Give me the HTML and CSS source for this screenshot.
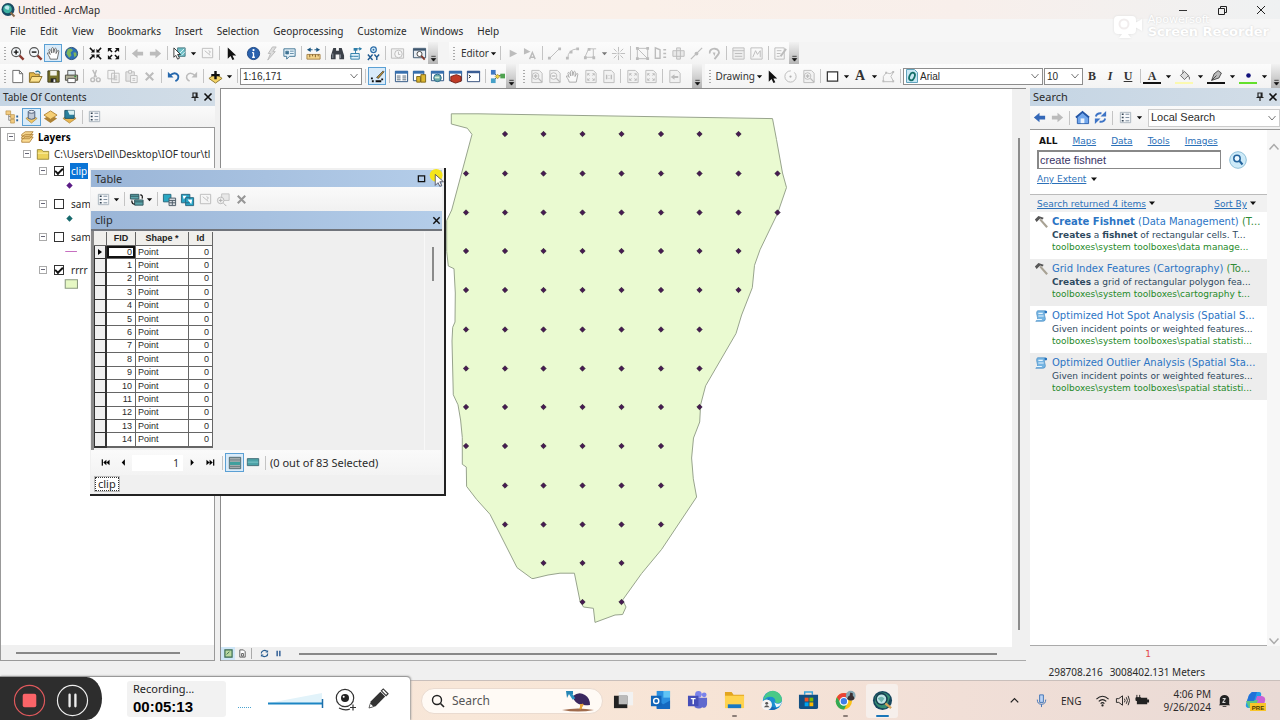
FILE: index.html
```html
<!DOCTYPE html>
<html lang="en">
<head>
<meta charset="utf-8">
<title>Untitled - ArcMap</title>
<link rel="stylesheet" href="styles.css">
</head>
<body>
<svg class="defs" aria-hidden="true">
  <symbol id="tri" viewBox="0 0 8 8"><path d="M1 2.500h6L4 6z" fill="#111"/></symbol>
  <symbol id="chev" viewBox="0 0 10 10"><path d="M1.500 3l3.500 4 3.500-4" fill="none" stroke="#777"/></symbol>
  <symbol id="over" viewBox="0 0 8 8"><path d="M1.500 1.500h5M1.500 4h5L4 7z" fill="#111" stroke="#111" stroke-width=".8"/></symbol>
  <symbol id="app" viewBox="0 0 16 16"><circle cx="8" cy="7.500" r="6.500" fill="#1b4a63"/><circle cx="7.500" cy="7" r="4.300" fill="#3fb0a0"/><path d="M4.500 5q3-3 5 0l-1 3-3-1z" fill="#bfe8ee"/><path d="M10.500 10.500l4 4" stroke="#8a6a4a" stroke-width="2"/></symbol>
  <symbol id="zin" viewBox="0 0 16 16"><path d="M10 10l4.500 4.500" stroke="#8b3a30" stroke-width="2.500"/><circle cx="6.500" cy="6.500" r="4.800" fill="#f4f8fb" stroke="#555" stroke-width="1.200"/><path d="M4 6.500h5M6.500 4v5" stroke="#111" stroke-width="1.500"/></symbol>
  <symbol id="zout" viewBox="0 0 16 16"><path d="M10 10l4.500 4.500" stroke="#8b3a30" stroke-width="2.500"/><circle cx="6.500" cy="6.500" r="4.800" fill="#f4f8fb" stroke="#555" stroke-width="1.200"/><path d="M4 6.500h5" stroke="#111" stroke-width="1.500"/></symbol>
  <symbol id="hand" viewBox="0 0 16 16"><path d="M4.500 14C4 11 1.500 9 1.500 7.500c1-.7 2 .3 3 1.500L3 4.500c.3-1.300 1.500-1 2 0l1.200 3L6 2.500c.5-1 1.700-1 2 0l.3 4.500 1-4c.6-.9 1.600-.6 1.700.3L10.700 8l1.600-3c.7-.7 1.500-.2 1.400.6L12 14z" fill="#fff" stroke="#666"/></symbol>
  <symbol id="globe" viewBox="0 0 16 16"><circle cx="8" cy="8" r="6.500" fill="#2c6fb8" stroke="#244c74"/><path d="M4 3.500q4-2 5.500 1L7 7l1 3-2.500 2.500L2.500 8zM10 7l3 0 .5 3-2.500 2z" fill="#7fb65c"/></symbol>
  <symbol id="shrink" viewBox="0 0 16 16"><path d="M2 2l3.500 3.500M14 2l-3.500 3.500M2 14l3.500-3.500M14 14l-3.500-3.500" stroke="#111" stroke-width="1.600"/><path d="M7 3v4H3zM9 3v4h4zM7 13V9H3zM9 13V9h4z" fill="#111"/></symbol>
  <symbol id="grow" viewBox="0 0 16 16"><path d="M3 3l3.500 3.500M13 3L9.500 6.500M3 13l3.500-3.500M13 13L9.500 9.500" stroke="#111" stroke-width="1.600"/><path d="M2 6.500V2h4.500zM14 6.500V2H9.500zM2 9.500V14h4.500zM14 9.500V14H9.500z" fill="#111"/></symbol>
  <symbol id="left" viewBox="0 0 16 16"><path d="M2 8l6-5v3h6v4H8v3z" fill="currentColor"/></symbol>
  <symbol id="right" viewBox="0 0 16 16"><path d="M14 8L8 3v3H2v4h6v3z" fill="currentColor"/></symbol>
  <symbol id="selfeat" viewBox="0 0 16 16"><path d="M6 2h8v9H6z" fill="#6fc0c8" stroke="#4a7880"/><path d="M8 8l5-5M10 10l4-4" stroke="#e6f8f8"/><path d="M2 2l7 7H6l2 4-2 1-2-4-2 2z" fill="#fff" stroke="#222" stroke-width=".9"/></symbol>
  <symbol id="clearsel" viewBox="0 0 16 16"><path d="M2.500 2.500h11v10h-11zM5 5l6 5M9 5l2 1-1 2" fill="none" stroke="currentColor"/></symbol>
  <symbol id="arrow" viewBox="0 0 16 16"><path d="M4 1.500v12l3-2.800L9 15l2-1-2-4h4z" fill="#111"/></symbol>
  <symbol id="info" viewBox="0 0 16 16"><circle cx="8" cy="8" r="6.500" fill="#2a62ae" stroke="#1d4580"/><path d="M8 7v5M6.500 7H8M6.500 12h3" stroke="#fff" stroke-width="1.400"/><circle cx="8" cy="4.300" r="1.200" fill="#fff"/></symbol>
  <symbol id="bolt" viewBox="0 0 16 16"><path d="M9 1h4L9.500 6H12l-8 9 3-7H4.500z" fill="#ddd" stroke="#bbb"/></symbol>
  <symbol id="popup" viewBox="0 0 16 16"><path d="M2 3h12v8H8l-3 3v-3H2z" fill="#e9f4fb" stroke="#3f7393"/><path d="M4 5.500h3v3H4zM8.500 5.500h4M8.500 8h4" fill="#3f7393" stroke="#3f7393" stroke-width=".8"/></symbol>
  <symbol id="measure" viewBox="0 0 16 16"><path d="M1 9h14v5H1z" fill="#f4d48a" stroke="#a8834a"/><path d="M4 9v3M7 9v2M10 9v3M13 9v2" stroke="#7c5c2c"/><path d="M4 4h8" stroke="#19547f" stroke-dasharray="3 2"/><path d="M1 4l4-2.500v5zM15 4l-4-2.500v5z" fill="#19547f"/></symbol>
  <symbol id="binoc" viewBox="0 0 16 16"><path d="M3.500 2h3v3h3V2h3l2.500 8v4h-5V9H6v5H1v-4z" fill="#3b4048"/><path d="M3 8v5M11 9v4" stroke="#9299a4"/></symbol>
  <symbol id="route" viewBox="0 0 16 16"><path d="M3 8h9v6H3z" fill="#dff1fb" stroke="#2e7da8"/><path d="M2 11h4M8 8V3h6M6 11h5" stroke="#2e7da8" fill="none"/><path d="M6 2h4v3H6zM12 1l3 2-3 2z" fill="#2e7da8"/></symbol>
  <symbol id="xy" viewBox="0 0 16 16"><circle cx="8" cy="4" r="3" fill="#d7eefa" stroke="#2e6da8" stroke-width="1.300"/><circle cx="8" cy="4" r="1" fill="#2e6da8"/><path d="M2 9l5 6M7 9l-5 6M9 9l2.500 3L14 9M11.500 12v3" stroke="#205a90" stroke-width="1.500" fill="none"/></symbol>
  <symbol id="time" viewBox="0 0 16 16"><path d="M1.500 3h13v10h-13z" fill="#eee" stroke="currentColor"/><circle cx="9" cy="8.500" r="4" fill="#f8f8f8" stroke="currentColor"/><path d="M9 6v3h2" fill="none" stroke="currentColor"/></symbol>
  <symbol id="viewer" viewBox="0 0 16 16"><path d="M1.500 2.500h13v10h-13z" fill="#e8edf2" stroke="#3e566e"/><path d="M1.500 4h13" stroke="#3e566e" stroke-width="2"/><circle cx="8" cy="8.500" r="2.700" fill="#fff" stroke="#444"/><path d="M10 10.500l3.500 4" stroke="#83392e" stroke-width="2"/></symbol>
  <symbol id="page" viewBox="0 0 16 16"><path d="M3 1.500h7l3.500 3.500v9.500H3zM10 1.500V5h3.500" fill="#fff" stroke="#666"/></symbol>
  <symbol id="open" viewBox="0 0 16 16"><path d="M1.500 4h5l1 1.500H12V14H1.500z" fill="#e3b84a" stroke="#866d2a"/><path d="M4 8h11l-3 6H1.500z" fill="#fbe18c" stroke="#866d2a"/><path d="M8 3q4-2 5 2" fill="none" stroke="#2f7a94" stroke-width="1.500"/></symbol>
  <symbol id="save" viewBox="0 0 16 16"><path d="M2 2h12v12H2z" fill="#77722a" stroke="#3d3b1e"/><path d="M4.500 2h7v5h-7z" fill="#f2f2ea"/><path d="M5 10h6v4H5z" fill="#222"/><path d="M8 11h2v3H8z" fill="#eee"/></symbol>
  <symbol id="print" viewBox="0 0 16 16"><path d="M4 1.500h8V7H4z" fill="#e4eef2" stroke="#555"/><path d="M1.500 6.500h13V12h-13z" fill="#b3b29a" stroke="#4b4b40"/><path d="M4 10h8v4.500H4z" fill="#fff" stroke="#555"/><path d="M11 8h2" stroke="#2c8a3c" stroke-width="1.500"/></symbol>
  <symbol id="cut" viewBox="0 0 16 16"><path d="M5 1l4 8M9 1L6.500 9" stroke="currentColor" stroke-width="1.500"/><circle cx="5" cy="11.500" r="2" fill="none" stroke="currentColor" stroke-width="1.500"/><circle cx="11" cy="11.500" r="2" fill="none" stroke="currentColor" stroke-width="1.500"/></symbol>
  <symbol id="copy" viewBox="0 0 16 16"><path d="M2 1.500h7v9H2zM6 4.500h8v10H6z" fill="#f4f4f4" stroke="currentColor"/><path d="M8 7.500h4M8 9.500h4M8 11.500h4" stroke="currentColor"/></symbol>
  <symbol id="paste" viewBox="0 0 16 16"><path d="M2 3h9v10H2z" fill="#d6d6d6" stroke="currentColor"/><path d="M5 1.500h3v3H5zM7 7h7v7.500H7z" fill="#f6f6f6" stroke="currentColor"/><path d="M9 10h3M9 12h3" stroke="currentColor"/></symbol>
  <symbol id="x" viewBox="0 0 16 16"><path d="M4 4l8 8M12 4l-8 8" stroke="currentColor" stroke-width="2.200"/></symbol>
  <symbol id="undo" viewBox="0 0 16 16"><path d="M4 7q6-5 9 0 1 4-3 6" fill="none" stroke="currentColor" stroke-width="2"/><path d="M2 3v6h6z" fill="currentColor"/></symbol>
  <symbol id="redo" viewBox="0 0 16 16"><path d="M12 7Q6 2 3 7q-1 4 3 6" fill="none" stroke="currentColor" stroke-width="1.600"/><path d="M14 3v6H8z" fill="currentColor"/></symbol>
  <symbol id="add" viewBox="0 0 16 16"><path d="M8 5l7 5-7 5-7-5z" fill="#f5d468" stroke="#8d752a"/><path d="M8 2v9M3.500 6.500h9" stroke="#111" stroke-width="2.600"/></symbol>
  <symbol id="edtool" viewBox="0 0 16 16"><path d="M2 9v4h11V9M2 13h3M8 13h3" fill="none" stroke="#111" stroke-dasharray="2 2" stroke-width="2"/><path d="M7 9l7-7 1 1-6 7z" fill="#b98e2d" stroke="#333" stroke-width=".7"/></symbol>
  <symbol id="grid" viewBox="0 0 16 16"><path d="M1.500 2.500h13v11h-13z" fill="#fff" stroke="#29507f"/><path d="M1 2h14v3H1z" fill="#376fae"/><path d="M3 7.500h4M9 7.500h4M3 9.500h4M9 9.500h4M3 11.500h4M9 11.500h4" stroke="#567"/></symbol>
  <symbol id="catalog" viewBox="0 0 16 16"><path d="M1.500 2.500h11v10h-11z" fill="#fff" stroke="#29507f"/><path d="M1 2h12v3H1z" fill="#376fae"/><path d="M5 8h4v6H5zM9.500 6h5v8h-5z" fill="#dcb72f" stroke="#80691b"/></symbol>
  <symbol id="searchw" viewBox="0 0 16 16"><path d="M1.500 2.500h13v10h-13z" fill="#fff" stroke="#29507f"/><path d="M1 2h14v3H1z" fill="#376fae"/><circle cx="8" cy="9.500" r="4" fill="#69a8a6" stroke="#28678d"/><path d="M5 9h5" stroke="#d7eed6" stroke-width="2"/></symbol>
  <symbol id="toolbox" viewBox="0 0 16 16"><path d="M1.500 2.500h13v10h-13z" fill="#fff" stroke="#29507f"/><path d="M1 2h14v3H1z" fill="#376fae"/><path d="M3 8l6-2 5 2v5l-6 2-5-2z" fill="#c13b25" stroke="#742016"/></symbol>
  <symbol id="python" viewBox="0 0 16 16"><path d="M1.500 2.500h13v11h-13z" fill="#fff" stroke="#2f4a78"/><path d="M1 2h14v2.500H1z" fill="#3b5d94"/><path d="M3 6.500l2 1.500-2 1.500" fill="none" stroke="#111"/></symbol>
  <symbol id="model" viewBox="0 0 16 16"><path d="M4 4l4 4 5-2M4 12l4-4" stroke="#444" fill="none"/><path d="M1 1h5v5H1z" fill="#3d78c4"/><path d="M1 10h5v5H1z" fill="#47a1c8"/><path d="M5.500 8L8 5.500 10.500 8 8 10.500z" fill="#ecd13e" stroke="#8e7a1f" stroke-width=".6"/><path d="M11 5h5v5h-5z" fill="#4fa350"/></symbol>
  <symbol id="play" viewBox="0 0 16 16"><path d="M5 4l8 4-8 4z" fill="currentColor"/></symbol>
  <symbol id="playa" viewBox="0 0 16 16"><path d="M1 2l7 4-7 3z" fill="currentColor"/><path d="M7 14l3-7 3 7M8 12h4" fill="none" stroke="currentColor" stroke-width="1.500"/></symbol>
  <symbol id="line" viewBox="0 0 16 16"><path d="M3 13L13 3" stroke="currentColor"/><path d="M1 11.500h3v3H1zM12 1.500h3v3h-3z" fill="currentColor"/></symbol>
  <symbol id="arc" viewBox="0 0 16 16"><path d="M3 13Q3 4 13 3" stroke="currentColor" fill="none"/><path d="M1 11.500h3v3H1zM12 1.500h3v3h-3zM5 5h3v3H5z" fill="currentColor"/></symbol>
  <symbol id="trace" viewBox="0 0 16 16"><path d="M2 12h9V3H6L2 12M11 3h3" stroke="currentColor" fill="none"/><path d="M1 11h3v3H1zM10 11h3v3h-3zM5 2h3v3H5z" fill="currentColor"/></symbol>
  <symbol id="star" viewBox="0 0 16 16"><path d="M8 1v5M8 10v5M1 8h5M10 8h5M3 3l3 3M13 3l-3 3M3 13l3-3M13 13l-3-3" stroke="currentColor"/><path d="M7 7h2v2H7z" fill="currentColor"/></symbol>
  <symbol id="verts" viewBox="0 0 16 16"><path d="M2.500 2.500v11h11L2.500 2.500M2.500 2.500h11v11" stroke="currentColor" fill="none"/><path d="M1 1h3v3H1zM1 12h3v3H1zM12 12h3v3h-3zM12 1h3v3h-3z" fill="currentColor"/></symbol>
  <symbol id="reshape" viewBox="0 0 16 16"><path d="M2.500 2v11h5V4zM11 4h3M11 8h3M11 12h3" stroke="currentColor" fill="none" stroke-width="1.500"/></symbol>
  <symbol id="cutp" viewBox="0 0 16 16"><path d="M2 5h12v6H2zM6 2h4v12H6z" fill="#ddd" stroke="currentColor"/></symbol>
  <symbol id="split" viewBox="0 0 16 16"><path d="M2 14L14 2" stroke="currentColor" stroke-width="1.300"/><circle cx="8" cy="8" r="2" fill="currentColor"/></symbol>
  <symbol id="rot" viewBox="0 0 16 16"><path d="M3 8a5 4 0 119 1l-4 5" stroke="currentColor" fill="none" stroke-width="2"/><path d="M6 7l3 0-1 4z" fill="currentColor"/></symbol>
  <symbol id="attr" viewBox="0 0 16 16"><path d="M2 2h12v12H2z" fill="#e8e8e8" stroke="currentColor"/><path d="M2 5h12M4 8h8M4 11h8" stroke="currentColor"/></symbol>
  <symbol id="sketch" viewBox="0 0 16 16"><path d="M2 2h12v12H2zM4 12l3-7 2 4 3-4 0 7" fill="none" stroke="currentColor"/></symbol>
  <symbol id="create" viewBox="0 0 16 16"><path d="M2 2h10v12H2zM4 5h5M4 8h4M4 11h3" fill="none" stroke="currentColor"/><path d="M8 11l6-8" stroke="currentColor" stroke-width="2"/></symbol>
  <symbol id="pgin" viewBox="0 0 16 16"><path d="M3 1.500h8l3 3v10H3z" fill="#eee" stroke="currentColor"/><circle cx="7" cy="7.500" r="3.500" fill="#f8f8f8" stroke="currentColor"/><path d="M5 7.500h4M7 5.500v4M10 10l4 4" stroke="currentColor" stroke-width="1.500"/></symbol>
  <symbol id="pgout" viewBox="0 0 16 16"><path d="M3 1.500h8l3 3v10H3z" fill="#eee" stroke="currentColor"/><circle cx="7" cy="7.500" r="3.500" fill="#f8f8f8" stroke="currentColor"/><path d="M5 7.500h4M10 10l4 4" stroke="currentColor" stroke-width="1.500"/></symbol>
  <symbol id="pgbox" viewBox="0 0 16 16"><path d="M3 1.500h8l3 3v10H3z" fill="#eee" stroke="currentColor"/><path d="M5 5l2 2M12 5l-2 2M5 12l2-2M12 12l-2-2M5 7V5h2M12 7V5h-2M5 10v2h2M12 10v2h-2" fill="none" stroke="currentColor"/></symbol>
  <symbol id="pgone" viewBox="0 0 16 16"><path d="M3 1.500h8l3 3v10H3z" fill="#eee" stroke="currentColor"/><path d="M6 6v5M11 6v5" stroke="currentColor" stroke-width="1.500"/><path d="M8.500 6.500v1M8.500 9.500v1" stroke="currentColor"/></symbol>
  <symbol id="pgback" viewBox="0 0 16 16"><path d="M3 1.500h8l3 3v10H3z" fill="#eee" stroke="currentColor"/><path d="M4 8.500l4-3v2h4v2H8v2z" fill="currentColor"/></symbol>
  <symbol id="rect" viewBox="0 0 16 16"><path d="M2.500 3h11v10h-11z" fill="#fff" stroke="#333" stroke-width="1.300"/></symbol>
  <symbol id="curve" viewBox="0 0 16 16"><path d="M2.500 13.500V8l3-4 4 1 4-2-3 5 3 5.500z" fill="none" stroke="currentColor"/><path d="M1.500 12h2v2h-2zM12 12h2v2h-2zM12 2h2v2h-2zM4.500 3h2v2h-2z" fill="currentColor"/></symbol>
  <symbol id="list" viewBox="0 0 16 16"><path d="M2.500 2.500h11v11h-11z" fill="#f6f8fa" stroke="#aab4bd"/><path d="M4 4.500h2M4 8h2M4 11.500h2" stroke="#345" stroke-width="1.600"/><path d="M8 4.500h4M8 8h4M8 11.500h4" stroke="#789"/></symbol>
  <symbol id="pin" viewBox="0 0 10 10"><path d="M3 1h4v4H3zM1.500 5.500h7M5 5.500V9M6.200 1v4" fill="none" stroke="#222" stroke-width="1.200"/></symbol>
  <symbol id="close" viewBox="0 0 10 10"><path d="M1.500 1.500l7 7M8.500 1.500l-7 7" stroke="#111" stroke-width="1.600"/></symbol>
  <symbol id="tree" viewBox="0 0 16 16"><path d="M4 5v7h4M4 8h4" fill="none" stroke="#888"/><path d="M1 2h5v4H1zM6 6h4v4H6zM6 11h4v4H6z" fill="#f2cc82" stroke="#b98d3e" stroke-width=".7"/><path d="M12 8h2M12 12h2" stroke="#28629a" stroke-width="2"/></symbol>
  <symbol id="source" viewBox="0 0 16 16"><path d="M2 10l6-3 6 3-6 5z" fill="#f1c766" stroke="#a98436" stroke-width=".7"/><path d="M4.500 3v7q3.500 2 7 0V3z" fill="#c0c9d6" stroke="#4c5c76"/><ellipse cx="8" cy="3" rx="3.500" ry="1.500" fill="#eff4fa" stroke="#4c5c76"/></symbol>
  <symbol id="layers" viewBox="0 0 16 16"><path d="M1 10l7-4 7 4-7 5z" fill="#ad8235"/><path d="M1 6.500L8 2l7 4.500L8 11z" fill="#f6cf74" stroke="#b38638"/></symbol>
  <symbol id="selly" viewBox="0 0 16 16"><path d="M1 10l7-4 7 4-7 5z" fill="#e9b752" stroke="#a77d30" stroke-width=".7"/><path d="M3 1.500h10V10H3z" fill="#277f9d" stroke="#225467"/><path d="M6 1.500h7V6H8z" fill="#d8f1f4"/></symbol>
  <symbol id="stack" viewBox="0 0 16 16"><path d="M2 11l4-3h9l-4 6H2zM2 8l4-3h9l-4 5H2zM2 5l4-3h9l-4 5H2z" fill="#fbdb93" stroke="#a9792c" stroke-width=".9"/></symbol>
  <symbol id="folder" viewBox="0 0 16 16"><path d="M1.500 3h5l1.500 2h6.500v9h-13z" fill="#ecd25b" stroke="#95832e"/><path d="M2 7h12" stroke="#fff6b8"/></symbol>
  <symbol id="related" viewBox="0 0 16 16"><path d="M1.500 2.500h9v5h-9zM6 8.500h9V14H6z" fill="#5ca5aa" stroke="#31565e"/><path d="M1.500 4.500h9M6 10.500h9" stroke="#31565e"/><path d="M12 3q3 0 2 4M3 9q0 4 3 4" fill="none" stroke="#111" stroke-width="1.300"/></symbol>
  <symbol id="seltab" viewBox="0 0 16 16"><path d="M1.500 2.500h8v8h-8z" fill="#2aa7c2" stroke="#28677d"/><path d="M7.500 6.500h7v8h-7z" fill="#d9dee2" stroke="#4c5b66"/><path d="M7.500 9h7M7.500 11.500h7M11 9v5" stroke="#4c5b66"/></symbol>
  <symbol id="switch" viewBox="0 0 16 16"><path d="M1.500 2.500h9v9h-9zM6 6h8.500v8.500H6z" fill="#26a3c5" stroke="#2b6680"/><path d="M3 4l4 0-3 4zM8 8l4 5 1-5z" fill="#fff"/></symbol>
  <symbol id="bars" viewBox="0 0 16 16"><path d="M1.500 1.500h13v13h-13z" fill="#a3abad" stroke="#476168"/><path d="M2 8.500h12" stroke="#3f9f9d" stroke-width="3.500"/><path d="M2 4.500h12M2 12h12" stroke="#6b7c80"/></symbol>
  <symbol id="barsel" viewBox="0 0 16 16"><path d="M1.500 3h13v8h-13z" fill="#4ca2a7" stroke="#3c6772"/><path d="M2 7h12" stroke="#86cdd0"/></symbol>
  <symbol id="hammer" viewBox="0 0 16 16"><path d="M7 5l8 9" stroke="#a8a294" stroke-width="2.500"/><path d="M1 5l4-4 6 2-1 2-3-1-4 4z" fill="#575757"/></symbol>
  <symbol id="script" viewBox="0 0 16 16"><path d="M4 2h9q-2 2-1 5l1 4q0 3-3 3H2q3-1 2-4l-1-5q0-2 1-3z" fill="#75b5e3" stroke="#4b8ec4" stroke-width=".8"/><path d="M5 5h5M5 8h6M3 12h6" stroke="#e9f6ff" stroke-width="1.300"/><circle cx="13.500" cy="3.500" r="1.500" fill="#2371bd"/></symbol>
  <marker id="dot" viewBox="0 0 8 8" refX="4" refY="4" markerWidth="7" markerHeight="7" markerUnits="userSpaceOnUse"><path d="M4 .9L7.100 4 4 7.100.9 4z" fill="#471b52" stroke="#2a1830" stroke-width=".7"/></marker>
</svg>

<header class="titlebar">
  <svg class="i16"><use href="#app"/></svg>
  <h1>Untitled - ArcMap</h1>
  <div class="winbtns">
    <button aria-label="Minimize"><svg viewBox="0 0 12 12"><path d="M2 6.500h8" stroke="#333"/></svg></button>
    <button aria-label="Restore"><svg viewBox="0 0 12 12"><path d="M2.500 4.500h6v6h-6zM4.500 4V2.500h6v6H9" fill="none" stroke="#222"/></svg></button>
    <button aria-label="Close"><svg viewBox="0 0 12 12"><path d="M2 2l8 8M10 2l-8 8" stroke="#222"/></svg></button>
  </div>
</header>

<nav class="menubar">
  <button>File</button><button>Edit</button><button>View</button><button>Bookmarks</button><button>Insert</button><button>Selection</button><button>Geoprocessing</button><button>Customize</button><button>Windows</button><button>Help</button>
</nav>

<div class="toolrow">
  <div class="toolbar">
    <i class="grip"></i>
    <button><svg><use href="#zin"/></svg></button><button><svg><use href="#zout"/></svg></button><button class="on"><svg><use href="#hand"/></svg></button><button><svg><use href="#globe"/></svg></button><i class="sep"></i>
    <button><svg><use href="#shrink"/></svg></button><button><svg><use href="#grow"/></svg></button><i class="sep"></i>
    <button class="dis"><svg><use href="#left"/></svg></button><button class="dis"><svg><use href="#right"/></svg></button><i class="sep"></i>
    <button><svg><use href="#selfeat"/></svg></button><button class="dd"><svg><use href="#tri"/></svg></button><button class="dis"><svg><use href="#clearsel"/></svg></button><i class="sep"></i>
    <button><svg><use href="#arrow"/></svg></button><i class="gap"></i><button><svg><use href="#info"/></svg></button><button><svg><use href="#bolt"/></svg></button><button><svg><use href="#popup"/></svg></button><i class="sep"></i>
    <button><svg><use href="#measure"/></svg></button><i class="sep"></i>
    <button><svg><use href="#binoc"/></svg></button><button><svg><use href="#route"/></svg></button><button><svg><use href="#xy"/></svg></button><i class="sep"></i>
    <button class="dis"><svg><use href="#time"/></svg></button><i class="gap"></i><button><svg><use href="#viewer"/></svg></button>
    <button class="over"><svg><use href="#over"/></svg></button>
  </div>
  <div class="toolbar editor">
    <i class="grip"></i>
    <button class="named">Editor<svg><use href="#tri"/></svg></button><i class="sep"></i>
    <button class="dis"><svg><use href="#play"/></svg></button><button class="dis"><svg><use href="#playa"/></svg></button><i class="sep"></i>
    <button class="dis"><svg><use href="#line"/></svg></button><button class="dis"><svg><use href="#arc"/></svg></button><button class="dis"><svg><use href="#trace"/></svg></button><button class="dd dis"><svg><use href="#tri"/></svg></button><button class="dis"><svg><use href="#star"/></svg></button><i class="sep"></i>
    <button class="dis"><svg><use href="#verts"/></svg></button><button class="dis"><svg><use href="#reshape"/></svg></button><button class="dis"><svg><use href="#cutp"/></svg></button><button class="dis"><svg><use href="#split"/></svg></button><button class="dis"><svg><use href="#rot"/></svg></button><i class="sep"></i>
    <button class="dis"><svg><use href="#attr"/></svg></button><button class="dis"><svg><use href="#sketch"/></svg></button><i class="sep"></i>
    <button class="dis"><svg><use href="#create"/></svg></button>
    <button class="over"><svg><use href="#over"/></svg></button>
  </div>
</div>

<div class="toolrow">
  <div class="toolbar">
    <i class="grip"></i>
    <button><svg><use href="#page"/></svg></button><button><svg><use href="#open"/></svg></button><button><svg><use href="#save"/></svg></button><button><svg><use href="#print"/></svg></button><i class="sep"></i>
    <button class="dis"><svg><use href="#cut"/></svg></button><button class="dis"><svg><use href="#copy"/></svg></button><button class="dis"><svg><use href="#paste"/></svg></button><button class="dis"><svg><use href="#x"/></svg></button><i class="sep"></i>
    <button class="blue"><svg><use href="#undo"/></svg></button><button class="dis"><svg><use href="#redo"/></svg></button><i class="sep"></i>
    <button><svg><use href="#add"/></svg></button><button class="dd"><svg><use href="#tri"/></svg></button><i class="sep"></i>
    <span class="combo scale"><select aria-label="Map scale"><option>1:16,171</option></select><svg><use href="#chev"/></svg></span><i class="sep"></i>
    <button class="on"><svg><use href="#edtool"/></svg></button><i class="sep"></i>
    <button><svg><use href="#grid"/></svg></button><button><svg><use href="#catalog"/></svg></button><button><svg><use href="#searchw"/></svg></button><button><svg><use href="#toolbox"/></svg></button><button><svg><use href="#python"/></svg></button><i class="sep"></i>
    <button><svg><use href="#model"/></svg></button>
    <button class="over"><svg><use href="#over"/></svg></button>
  </div>
  <div class="toolbar layout">
    <i class="grip"></i>
    <button class="dis"><svg><use href="#pgin"/></svg></button><button class="dis"><svg><use href="#pgout"/></svg></button><button class="dis"><svg><use href="#hand"/></svg></button><button class="dis"><svg><use href="#pgbox"/></svg></button><button class="dis"><svg><use href="#pgone"/></svg></button><i class="sep"></i>
    <button class="dis"><svg><use href="#pgbox"/></svg></button><button class="dis"><svg><use href="#pgbox"/></svg></button><i class="sep"></i>
    <button class="dis"><svg><use href="#pgback"/></svg></button><i class="gap wide"></i>
    <button class="over"><svg><use href="#over"/></svg></button>
  </div>
  <div class="toolbar drawing">
    <i class="grip"></i>
    <button class="named draw">Drawing<svg><use href="#tri"/></svg></button>
    <button><svg><use href="#arrow"/></svg></button><button class="dis"><svg viewBox="0 0 16 16"><circle cx="8" cy="8" r="6" fill="none" stroke="#888" stroke-dasharray="28 4"/><circle cx="8" cy="8" r="1.200" fill="#777"/></svg></button><button class="dis"><svg><use href="#pgin"/></svg></button><i class="sep"></i>
    <button><svg><use href="#rect"/></svg></button><button class="dd"><svg><use href="#tri"/></svg></button><button class="serif">A</button><button class="dd"><svg><use href="#tri"/></svg></button><button class="dis"><svg><use href="#curve"/></svg></button><i class="sep"></i>
    <span class="combo font"><svg class="ficon" viewBox="0 0 12 14"><path d="M.5.5h8l3 3v10H.5z" fill="#c8e8f4" stroke="#62a3bd"/><ellipse cx="6" cy="7.500" rx="2.500" ry="4" transform="rotate(25 6 7.500)" fill="none" stroke="#146f68" stroke-width="1.800"/></svg><select aria-label="Font"><option>Arial</option></select><svg><use href="#chev"/></svg></span>
    <span class="combo size"><select aria-label="Font size"><option>10</option></select><svg><use href="#chev"/></svg></span>
    <button class="serif small">B</button><button class="serif small ital">I</button><button class="serif small und">U</button><i class="sep"></i>
    <button class="serif small swatch black">A</button><button class="dd far"><svg><use href="#tri"/></svg></button>
    <button class="swatch yellow"><svg viewBox="0 0 16 16"><path d="M3 8l5-5 5 5-5 5zM6 5V1M12 8q3 1 2 5" fill="#ddd" stroke="#555"/></svg></button><button class="dd far"><svg><use href="#tri"/></svg></button>
    <button class="swatch black"><svg viewBox="0 0 16 16"><path d="M2 14l3-8 5-4 4 3-3 6zM2 14l6-6" fill="#bbb" stroke="#333"/></svg></button><button class="dd far"><svg><use href="#tri"/></svg></button>
    <button class="swatch green"><svg viewBox="0 0 16 16"><circle cx="8" cy="8" r="2.800" fill="#11117c"/></svg></button><button class="dd far"><svg><use href="#tri"/></svg></button>
    <button class="over"><svg><use href="#over"/></svg></button>
  </div>
</div>

<main class="workspace">
  <section class="toc">
    <h2 class="paneltitle">Table Of Contents<span><svg><use href="#pin"/></svg><svg><use href="#close"/></svg></span></h2>
    <div class="paneltools">
      <button><svg><use href="#tree"/></svg></button><button class="on"><svg><use href="#source"/></svg></button><button><svg><use href="#layers"/></svg></button><button><svg><use href="#selly"/></svg></button><i class="sep"></i><button><svg><use href="#list"/></svg></button>
    </div>
    <div class="treebox">
      <div class="node root"><i class="minus"></i><svg><use href="#stack"/></svg><b>Layers</b></div>
      <div class="node dir"><i class="minus"></i><svg><use href="#folder"/></svg><span>C:\Users\Dell\Desktop\IOF tour\tl</span></div>
      <div class="node"><i class="minus"></i><input type="checkbox" id="l1" checked><label for="l1" class="sel">clip</label></div>
      <div class="sym"><svg viewBox="0 0 16 12"><path d="M8 3l3 3-3 3-3-3z" fill="#5b1c86"/></svg></div>
      <div class="node"><i class="minus"></i><input type="checkbox" id="l2"><label for="l2">sam</label></div>
      <div class="sym"><svg viewBox="0 0 16 12"><path d="M8 3l3 3-3 3-3-3z" fill="#17696c"/></svg></div>
      <div class="node"><i class="minus"></i><input type="checkbox" id="l3"><label for="l3">sam</label></div>
      <div class="sym"><svg viewBox="0 0 16 12"><path d="M4 6h11" stroke="#c66fc0"/></svg></div>
      <div class="node"><i class="minus"></i><input type="checkbox" id="l4" checked><label for="l4">rrrr</label></div>
      <div class="sym"><svg viewBox="0 0 16 12"><path d="M4 1.500h11.500v8H4z" fill="#e6f8c4" stroke="#8b9a80"/></svg></div>
    </div>
    <div class="hscroll"><i></i></div>
  </section>

  <section class="mapview">
    <svg class="map" viewBox="221 89 791 558" role="img" aria-label="Map of the clipped points">
      <path d="M451.300 113.800L478 113.800 772.500 118.600 776.500 139.600 782.500 173 786.500 187.500 777.500 213.600 770 229 760 249.800 754.500 265.300 752.300 287.700 741.600 315 736 333.500 705.600 385.800 700.600 404.800 699.700 422 693.500 438 691.600 458 693.300 478.800 696.600 497 661.600 549.400 641.600 573.500 622.600 600 626 607 622.600 614.500 615 615 595 622.400 593.400 608.300 583.500 607 580 601 574.400 573.200 560 573.200 548 575 533 578.600 531.600 578.300 517 567.600 490 514.300 476.600 499.400 466.600 486.400 466.300 467 462.300 464.300 462.300 437.500 460.600 420 458 404.800 453.300 394.800 452 341 452.700 327.300 455 322 455.300 293 454 268.700 448.300 266 446.700 251.500 446.700 220.500 451.700 210 472 134.400 467.300 128.200 451.300 124z" fill="#eafad1" stroke="#98a48d"/>
      <path fill="none" marker-start="url(#dot)" marker-mid="url(#dot)" marker-end="url(#dot)" d="M505 134H543.500H582.500H621.500H661H699.500H738.500M466 173.500H505H543.500H582.500H621.500H661H699.500H738.500H777.500M466 212.500H505H543.500H582.500H621.500H661H699.500H738.500H777.500M466 251H505H543.500H582.500H621.500H661H699.500H738.500M466 290H505H543.500H582.500H621.500H661H699.500H738.500M466 329.500H505H543.500H582.500H621.500H661H699.500M466 368.500H505H543.500H582.500H621.500H661H699.500M466 407H505H543.500H582.500H621.500H661H699.500M466 446H505H543.500H582.500H621.500H661M505 485.500H543.500H582.500H621.500H661M505 524.500H543.500H582.500H621.500H661M543.500 563H582.500H621.500M582.500 602H621.500"/>
    </svg>
    <div class="vscroll"><i></i></div>
    <div class="mapfoot">
      <button class="lit"><svg viewBox="0 0 10 10"><path d="M1 1h8v8H1z" fill="#b9d9a0" stroke="#386a50" stroke-width="1.300"/><path d="M3 6l3-3" stroke="#386a50"/></svg></button>
      <button><svg viewBox="0 0 10 10"><path d="M2 1h4l2 2v6H2zM4 5h2v3H4z" fill="#fff" stroke="#555"/></svg></button>
      <i class="bar"></i>
      <button><svg viewBox="0 0 10 10"><path d="M1.500 5a3.500 3 0 016-2.500M8.500 5a3.500 3 0 01-6 2.500" fill="none" stroke="#2a5f91" stroke-width="1.300"/><path d="M9 1v3H6zM1 9V6h3z" fill="#2a5f91"/></svg></button>
      <button><svg viewBox="0 0 10 10"><path d="M3.500 2v6M6.500 2v6" stroke="#2d5c94" stroke-width="1.600"/></svg></button>
      <i class="track"></i>
    </div>
  </section>

  <section class="search">
    <h2 class="paneltitle">Search<span><svg><use href="#pin"/></svg><svg><use href="#close"/></svg></span></h2>
    <div class="paneltools stools">
      <button class="blue"><svg><use href="#left"/></svg></button><button class="dis"><svg><use href="#right"/></svg></button><i class="sep"></i>
      <button><svg viewBox="0 0 16 16"><path d="M1.500 8L8 2l6.500 6v6.500h-12V8z" fill="#72a7ec" stroke="#2b5fae"/><path d="M1 8l7-6 7 6" fill="none" stroke="#2456a5" stroke-width="2"/><path d="M6 9h4v5H6z" fill="#eaf3ff"/></svg></button>
      <button class="blue"><svg viewBox="0 0 16 16"><path d="M3 7q1-4 6-3.500M13 9q-1 4-6 3.500" fill="none" stroke="#3d74c6" stroke-width="2"/><path d="M14 1v6H8zM2 15V9h6z" fill="#3d74c6"/></svg></button><i class="sep"></i>
      <button><svg><use href="#list"/></svg></button><button class="dd"><svg><use href="#tri"/></svg></button>
      <span class="combo local"><select aria-label="Search scope"><option>Local Search</option></select><svg><use href="#chev"/></svg></span>
    </div>
    <div class="sbody">
      <div class="smain">
        <nav class="tabs"><b>ALL</b><a href="#">Maps</a><a href="#">Data</a><a href="#">Tools</a><a href="#">Images</a></nav>
        <div class="query"><input type="text" aria-label="Search text" value="create fishnet"><button aria-label="Search"><svg viewBox="0 0 18 18"><circle cx="9" cy="9" r="8.300" fill="#cdeaf8" stroke="#8ebfd8"/><circle cx="8" cy="7.500" r="3.200" fill="#eef9ff" stroke="#23639c" stroke-width="1.500"/><path d="M10.500 10l3 3.500" stroke="#23639c" stroke-width="2"/></svg></button></div>
        <div class="extent"><a href="#">Any Extent</a><svg><use href="#tri"/></svg></div>
        <div class="found"><span><a href="#">Search returned 4 items</a><svg><use href="#tri"/></svg></span><span><a href="#">Sort By</a><svg><use href="#tri"/></svg></span></div>
        <article><svg><use href="#hammer"/></svg><div><h3><b>Create Fishnet</b> (Data Management) <em>(T...</em></h3><p><b>Creates</b> a <b>fishnet</b> of rectangular cells. T...</p><cite>toolboxes\system toolboxes\data manage...</cite></div></article>
        <article><svg><use href="#hammer"/></svg><div><h3>Grid Index Features (Cartography) <em>(To...</em></h3><p><b>Creates</b> a grid of rectangular polygon fea...</p><cite>toolboxes\system toolboxes\cartography t...</cite></div></article>
        <article><svg><use href="#script"/></svg><div><h3>Optimized Hot Spot Analysis (Spatial S...</h3><p>Given incident points or weighted features...</p><cite>toolboxes\system toolboxes\spatial statisti...</cite></div></article>
        <article><svg><use href="#script"/></svg><div><h3>Optimized Outlier Analysis (Spatial Sta...</h3><p>Given incident points or weighted features...</p><cite>toolboxes\system toolboxes\spatial statisti...</cite></div></article>
      </div>
      <div class="sbar"><svg viewBox="0 0 10 10"><path d="M.5 7.500L5 2.500l4.500 5" fill="none" stroke="#aaa" stroke-width="1.500"/></svg><svg viewBox="0 0 10 10"><path d="M.5 2.500L5 7.500l4.500-5" fill="none" stroke="#aaa" stroke-width="1.500"/></svg></div>
    </div>
    <div class="pager">1</div>
  </section>
</main>

<footer class="status"><span>298708.216</span><span>3008402.131 Meters</span></footer>

<footer class="taskbar">
  <label class="tsearch"><svg viewBox="0 0 14 14"><circle cx="6" cy="6" r="4.500" fill="none" stroke="#222" stroke-width="1.400"/><path d="M9.500 9.500L13 13" stroke="#222" stroke-width="1.600"/></svg><input type="search" placeholder="Search" aria-label="Search"><svg class="bird" viewBox="0 0 34 22"><path d="M1 20q16-3 32 0-16 3-32 0z" fill="#a06b4c"/><path d="M12 6q6-5 12-1 5 3 5 10-9 1-13-2-4-3-4-7z" fill="#3b285f"/><path d="M13 9L9 3" stroke="#2b91c1" stroke-width="3"/><path d="M5 1h7v3H8L6 8z" fill="#2686b5"/><path d="M20 14v5M22 14l-3 5" stroke="#e5a23c" stroke-width="2"/></svg></label>
  <div class="apps">
    <button><svg viewBox="0 0 22 22"><path d="M6 2h15v14H6z" fill="#f2f2f2"/><path d="M1 6h14v13H1z" fill="#222"/><path d="M6 6h9v9H6z" fill="#bbb"/></svg></button>
    <button><svg viewBox="0 0 22 22"><path d="M7 1h14v18H7z" fill="#2a8fe0"/><path d="M14 1h7v7h-7z" fill="#5fc4f5"/><path d="M7 11l7 4 7-4v9H7z" fill="#1569c0"/><path d="M1 6h11v11H1z" fill="#1265b8"/><circle cx="6.500" cy="11.500" r="2.700" fill="none" stroke="#fff" stroke-width="1.500"/></svg></button>
    <button><svg viewBox="0 0 22 22"><circle cx="18" cy="5" r="2.500" fill="#7b83eb"/><circle cx="12" cy="4.500" r="3.500" fill="#7b83eb"/><path d="M8 8h13v7q-1 5-5 3-3 3-8 0z" fill="#6069ce"/><path d="M1 6h11v11H1z" fill="#464eb8"/><path d="M4 9h5M6.500 9v6" stroke="#fff" stroke-width="1.500"/></svg></button>
    <button class="run"><svg viewBox="0 0 22 22"><path d="M1 2h7l2 3h11v4H1z" fill="#e3a51f"/><path d="M1 6h20v13H1z" fill="#ffd34e"/><path d="M4 15h14v4H4z" fill="#1878c4"/></svg></button>
    <button><svg viewBox="0 0 22 22"><circle cx="12" cy="11" r="10" fill="#1c8fd1"/><path d="M3 8Q7 0 14 1q8 2 8 10-2 4-7 2Q16 7 9 7 5 7 3 11z" fill="#49c987"/><path d="M8 12q1 6 9 7-6 4-11 0-4-6 3-11z" fill="#1667b5"/><path d="M22 12q-3 4-8 1l2 5q4 0 6-6" fill="#f0f8fc"/><circle cx="6" cy="15.500" r="5.500" fill="#f4f4f4"/><circle cx="6" cy="14" r="1.500" fill="#555"/><path d="M3 18q3-4 6 0z" fill="#555"/></svg></button>
    <button><svg viewBox="0 0 22 22"><path d="M7 5V2h8v3" fill="none" stroke="#39a5dd" stroke-width="1.500"/><path d="M1 5h20v13q0 2-2 2H3q-2 0-2-2z" fill="#124f83"/><path d="M7 8h4v4H7z" fill="#f25022"/><path d="M12 8h4v4h-4z" fill="#7fba00"/><path d="M7 13h4v4H7z" fill="#00a4ef"/><path d="M12 13h4v4h-4z" fill="#ffb900"/></svg></button>
    <button class="run"><svg viewBox="0 0 26 24"><circle cx="11" cy="13" r="10" fill="#fbc116"/><path d="M2.300 8A10 10 0 0120 8l-9 1-4 6z" fill="#ea4335"/><path d="M2.300 8a10 10 0 009 15l4-8H7z" fill="#34a853"/><circle cx="11" cy="13" r="4.700" fill="#3f7ee8" stroke="#fff" stroke-width="1.500"/><circle cx="19.500" cy="6" r="6" fill="#87a9b5"/><path d="M15 10q1-4 3-4l1-4 3 1v3q2 1 2 4-4 4-9 0z" fill="#3b3032"/></svg></button>
    <button class="run active"><svg viewBox="0 0 22 22"><circle cx="11" cy="11" r="10" fill="#17465e"/><path d="M3 7q8-9 16 0l-4 12q-9 1-12-6z" fill="#358d72"/><circle cx="10" cy="9.500" r="5.700" fill="#bfe4e4" stroke="#163d50" stroke-width="1.600"/><path d="M6 9q4-4 7 0l-3 4z" fill="#72b6b0"/><path d="M14 14l6 5" stroke="#d5a45b" stroke-width="2.500"/></svg></button>
  </div>
  <div class="tray">
    <svg class="ico" viewBox="0 0 16 16"><path d="M4 10l4-4 4 4" fill="none" stroke="#222" stroke-width="1.400"/></svg>
    <svg class="ico" viewBox="0 0 16 16"><path d="M6 2h4v8H6z" fill="#bcd3f5" stroke="#3f72b5"/><path d="M3.500 7q0 5 4.500 5t4.500-5M8 12v3" fill="none" stroke="#3f72b5"/></svg>
    <span class="lang">ENG</span>
    <span class="net"><svg class="ico" viewBox="0 0 16 16"><path d="M1.500 6.500q6.500-6 13 0M4 9q4-4 8 0M6 11.300q2-2 4 0" fill="none" stroke="#222" stroke-width="1.200"/><circle cx="8" cy="13.200" r="1.200" fill="#222"/></svg><svg class="ico" viewBox="0 0 16 16"><path d="M1.500 6h2.500l4-3v10l-4-3H1.500zM10 6q1.500 2 0 4M12 4.500q2.500 3.500 0 7M14 3q3 5 0 10" fill="none" stroke="#222"/></svg><svg class="ico" viewBox="0 0 16 16"><path d="M2 5h11v7H2zM13 7h2v3h-2z" fill="#222"/><path d="M2 2v4M5 2v4M1 5h5v3H1z" fill="#222" stroke="#222"/></svg></span>
    <time>4:06 PM<br>9/26/2024</time>
    <svg class="ico" viewBox="0 0 16 16"><path d="M3 12V6q1-4 5-4t5 4v6l1 1H2zM6 14h4v1H6z" fill="#222"/><path d="M6 6h3l-3 4h3" fill="none" stroke="#fff"/></svg>
    <svg class="pre" viewBox="0 0 22 22"><path d="M8 2h7q3 0 2 4l-4 12H5q-4 0-3-4L5 5z" fill="#249ce8"/><path d="M13 6h5q4 1 3 5l-2 7H9z" fill="#c963d5"/><path d="M2 11l3 7h6l3-8z" fill="#5ec681"/><path d="M8 2h5l-3 9H3l2-6z" fill="#2371d9"/><path d="M6 13h16v8H6z" fill="#f8c529"/><text x="14" y="20" text-anchor="middle" class="pretext">PRE</text></svg>
  </div>
</footer>

<section class="tablewin">
  <h2>Table<span><svg viewBox="0 0 10 10"><path d="M1.500 2h7v6.500h-7z" fill="none" stroke="#111" stroke-width="1.400"/></svg></span></h2>
  <div class="paneltools ttools">
    <button><svg><use href="#list"/></svg></button><button class="dd"><svg><use href="#tri"/></svg></button><i class="sep"></i>
    <button><svg><use href="#related"/></svg></button><button class="dd"><svg><use href="#tri"/></svg></button><i class="sep"></i>
    <button><svg><use href="#seltab"/></svg></button><button><svg><use href="#switch"/></svg></button><button class="dis"><svg><use href="#clearsel"/></svg></button><button class="dis"><svg viewBox="0 0 16 16"><path d="M6 2h8v7H6z" fill="#ddd" stroke="#999"/><circle cx="5" cy="9" r="3.500" fill="#eee" stroke="#888"/><path d="M3 9h4M5 7v4M8 12l3 3" stroke="#777"/></svg></button><button class="dis deep"><svg><use href="#x"/></svg></button>
  </div>
  <h3>clip<svg><use href="#close"/></svg></h3>
  <div class="gridbox">
    <table>
      <thead><tr><th class="c0"></th><th class="c1">FID</th><th class="c2">Shape *</th><th class="c3">Id</th></tr></thead>
      <tbody>
        <tr class="cur"><td><svg viewBox="0 0 6 8"><path d="M1 1l4 3-4 3z"/></svg></td><td>0</td><td>Point</td><td>0</td></tr>
        <tr><td></td><td>1</td><td>Point</td><td>0</td></tr>
        <tr><td></td><td>2</td><td>Point</td><td>0</td></tr>
        <tr><td></td><td>3</td><td>Point</td><td>0</td></tr>
        <tr><td></td><td>4</td><td>Point</td><td>0</td></tr>
        <tr><td></td><td>5</td><td>Point</td><td>0</td></tr>
        <tr><td></td><td>6</td><td>Point</td><td>0</td></tr>
        <tr><td></td><td>7</td><td>Point</td><td>0</td></tr>
        <tr><td></td><td>8</td><td>Point</td><td>0</td></tr>
        <tr><td></td><td>9</td><td>Point</td><td>0</td></tr>
        <tr><td></td><td>10</td><td>Point</td><td>0</td></tr>
        <tr><td></td><td>11</td><td>Point</td><td>0</td></tr>
        <tr><td></td><td>12</td><td>Point</td><td>0</td></tr>
        <tr><td></td><td>13</td><td>Point</td><td>0</td></tr>
        <tr><td></td><td>14</td><td>Point</td><td>0</td></tr>
        <tr><td></td><td></td><td></td><td></td></tr>
      </tbody>
    </table>
    <div class="gscroll"><i></i></div>
  </div>
  <div class="recnav">
    <button><svg viewBox="0 0 10 10"><path d="M1.500 1.500v7" stroke="#111" stroke-width="1.500"/><path d="M6 2v6L2.500 5zM9.500 2v6L6 5z"/></svg></button>
    <button><svg viewBox="0 0 10 10"><path d="M6.500 1.500v7L3 5z"/></svg></button>
    <input type="text" aria-label="Record" value="1">
    <button><svg viewBox="0 0 10 10"><path d="M3 1.500v7L6.500 5z"/></svg></button>
    <button><svg viewBox="0 0 10 10"><path d="M8.500 1.500v7" stroke="#111" stroke-width="1.500"/><path d="M4 2v6l3.500-3zM.5 2v6L4 5z"/></svg></button>
    <i class="sep"></i>
    <button class="on"><svg><use href="#bars"/></svg></button><button><svg><use href="#barsel"/></svg></button><i class="sep"></i>
    <span>(0 out of 83 Selected)</span>
  </div>
  <div class="tabstrip"><button>clip</button></div>
  <svg class="cursor" viewBox="0 0 20 24"><circle cx="8" cy="8" r="7" fill="#f5e51c"/><path d="M7 7v12l3-3 2 4 2-1-2-4h4z" fill="#fff" stroke="#445" stroke-width=".9"/></svg>
</section>

<aside class="recorder">
  <div class="dark">
    <button aria-label="Stop"><svg viewBox="0 0 34 34"><circle cx="17" cy="17" r="15.500" fill="none" stroke="#e0595c" stroke-width="1.200"/><rect x="10" y="10" width="14" height="14" rx="2" fill="#fb6468"/></svg></button>
    <button aria-label="Pause"><svg viewBox="0 0 34 34"><circle cx="17" cy="17" r="15.500" fill="none" stroke="#eee" stroke-width="1.200"/><path d="M14 11v12M20 11v12" stroke="#eee" stroke-width="2.400" stroke-linecap="round"/></svg></button>
  </div>
  <div class="clock"><span>Recording...</span><strong>00:05:13</strong></div>
  <i class="dots"></i>
  <svg class="vol" viewBox="0 0 56 18"><path d="M1 12L54 2v10z" fill="#e2f3fa"/><path d="M0 12.500h54" stroke="#1d86c4" stroke-width="2"/><path d="M54.500 8v9" stroke="#1d6eaa" stroke-width="1.500"/></svg>
  <svg class="cam" viewBox="0 0 22 24"><circle cx="10" cy="10" r="8.700" fill="none" stroke="#333" stroke-width="1.200"/><circle cx="10" cy="10" r="4" fill="#222"/><circle cx="8.700" cy="8.700" r="1" fill="#fff"/><path d="M4 20q6 3 11 1M15 19.500h6M18 16.500v6" fill="none" stroke="#333" stroke-width="1.200"/></svg>
  <svg class="pen" viewBox="0 0 22 22"><path d="M1 21l2-7L13 4l5 5L8 19z" fill="#333"/><path d="M14 3l2-2 5 5-2 2z" fill="#fff" stroke="#333" stroke-width="1.200"/><path d="M1 21l1.500-5 3.500 3.500z" fill="#fff" stroke="#333" stroke-width=".7"/></svg>
</aside>

<aside class="mark">
  <svg viewBox="0 0 30 26"><rect x="1" y="2" width="22" height="18" rx="4"/><path d="M22 9l7-4v12l-7-4zM9 20h6l3 4H6z"/><circle cx="11" cy="10" r="5.500" fill="#f1eded"/><circle cx="11" cy="10" r="3.500"/></svg>
  <div><span>Apowersoft</span><strong>Screen Recorder</strong></div>
</aside>
</body>
</html>
```
FILE: styles.css
```css
* { box-sizing: border-box; }
body {
  margin: 0; height: 100vh; min-height: 600px; overflow: hidden;
  display: flex; flex-direction: column; position: relative;
  background: #f0f0f0; color: #2a2a2a;
  font: 11px/16px "Noto Sans", "Open Sans", sans-serif;
}
h1, h2, h3, p { margin: 0; font: inherit; }
button, input, select { font: inherit; color: inherit; margin: 0; }
button { border: 0; padding: 0; background: none; }
.defs { position: absolute; width: 0; height: 0; }

.titlebar, .menubar, .toolrow, .toc, .status { font-size: 10px; }
.titlebar { flex: 0 0 19px; display: flex; align-items: center; gap: 2px; background: linear-gradient(90deg, #f9f0ee, #faf0e9 50%, #f8efeb 75%, #eff1f2); }
.titlebar .i16 { width: 16px; height: 16px; }
.winbtns { margin-left: auto; display: flex; }
.winbtns button { width: 39px; height: 19px; display: grid; place-items: center; }
.winbtns svg { width: 12px; height: 12px; }

.menubar { flex: 0 0 23px; display: flex; align-items: center; gap: 14px; padding-left: 10px; background: #f6f6f6; }

.toolrow { flex: 0 0 22px; display: flex; background: #f4f4f4; }
.toolrow + .toolrow { flex-basis: 24px; }
.toolbar { display: flex; align-items: center; background: linear-gradient(#fcfcfc, #f3f3f3); }
.toolbar.editor { margin-left: 11px; }
.toolbar.layout, .toolbar.drawing { margin-left: 3px; }
.toolbar.drawing { flex: 1; }
.toolbar button, .paneltools button, .recnav button { flex: none; width: 18px; height: 18px; display: grid; place-items: center; color: #333; }
.toolbar svg, .paneltools svg { width: 15px; height: 15px; display: block; }
.toolbar .dd, .paneltools .dd { width: 10px; }
.toolbar .far { width: 14px; }
.toolbar .dd svg, .paneltools .dd svg, .toolbar .named svg { width: 7px; height: 7px; }
.toolbar .named { width: 40px; display: flex; align-items: center; justify-content: flex-end; gap: 1px; }
.toolbar .named.draw { width: 50px; }
.toolbar .on, .paneltools .on, .recnav .on { background: #d9ebf9; box-shadow: inset 0 0 0 1px #5ba0d4; }
.toolbar .dis, .paneltools .dis { color: #8c8c8c; opacity: .55; }
.paneltools .deep { opacity: .9; }
.toolbar .blue { color: #2668ad; }
.toolbar .over { width: 10px; height: 100%; place-items: end center; padding-bottom: 2px; background: linear-gradient(#f2f2f2, #b5b5b5); }
.toolbar .over svg { width: 7px; height: 7px; }
.grip { width: 8px; height: 14px; flex: none; background: radial-gradient(circle, #aaa 1px, transparent 1px) 0 0 / 10px 3px; }
.sep { flex: none; width: 6px; height: 14px; background: linear-gradient(#c4c4c4, #c4c4c4) center / 1px 100% no-repeat; }
.gap { flex: none; width: 4px; }
.gap.wide { width: 9px; }
.toolbar .serif { font: bold 14px/16px "Liberation Serif", serif; }
.toolbar .small { font-size: 12px; }
.toolbar .ital { font-style: italic; }
.toolbar .und { text-decoration: underline; }
.toolbar .swatch { border-bottom: 2px solid #111; width: 18px; height: 16px; }
.toolbar .swatch svg { width: 13px; height: 13px; }
.toolbar .yellow { border-color: #fbf9b0; }
.toolbar .green { border-color: #63e02c; }

.combo { position: relative; display: flex; align-items: center; background: #fff; border: 1px solid #8d8d8d; height: 17px; flex: none; }
.combo select { appearance: none; border: 0; background: none; padding: 0 12px 0 2px; width: 100%; height: 15px; font: 10px/15px "Liberation Sans", sans-serif; }
.toolbar .combo svg, .combo svg { position: absolute; right: 2px; width: 10px; height: 10px; }
.toolbar .combo .ficon { position: static; width: 12px; height: 14px; margin-left: 2px; flex: none; }
.scale { width: 122px; }
.font { width: 140px; }
.size { width: 39px; margin-left: 1px; }

.workspace { flex: 1; min-height: 0; display: flex; }
.paneltitle { flex: 0 0 18px; display: flex; align-items: center; justify-content: space-between; padding: 0 2px 0 3px; background: linear-gradient(90deg, #c5d5e4, #d2dde7); }
.paneltitle span { display: flex; gap: 3px; }
.paneltitle svg { width: 10px; height: 10px; }
.paneltools { flex: none; display: flex; align-items: center; background: linear-gradient(#fafafa, #f1f1f1); }

.toc { flex: 0 0 215px; min-width: 0; display: flex; flex-direction: column; border-bottom: 1px solid #999; margin-bottom: 1px; }
.toc .paneltools { height: 21px; padding-left: 3px; }
.toc .paneltools button { width: 19px; }
.treebox { flex: 1; min-height: 0; overflow: hidden; background: #fff; border: 1px solid #999; border-bottom: 0; }
.node { display: flex; align-items: center; height: 17px; gap: 4px; padding-left: 38px; white-space: nowrap; overflow: hidden; }
.node.root { padding-left: 6px; color: #000; }
.node.dir { padding-left: 22px; }
.node svg { width: 14px; height: 14px; flex: none; }
.node input { appearance: none; width: 10px; height: 10px; border: 1px solid #333; background: #fff; margin: 0 2px 0 3px; flex: none; display: grid; place-items: center; }
.node input:checked::after { content: ""; width: 6px; height: 3px; border: solid #111; border-width: 0 0 2px 2px; transform: rotate(-45deg); }
.node label { padding: 0 1px; line-height: 16px; }
.node .sel { background: #0a74d6; color: #fff; }
.minus { flex: none; width: 8px; height: 8px; border: 1px solid #aaa; background: linear-gradient(#667, #667) center / 4px 1px no-repeat; }
.root .minus { margin-right: 1px; }
.dir .minus { margin-right: 1px; }
.sym { height: 16px; padding-left: 60px; }
.sym svg { width: 17px; height: 13px; display: block; }
.hscroll { flex: 0 0 15px; display: flex; align-items: center; padding: 0 34px 0 15px; border: solid #999; border-width: 0 1px; }
.hscroll i { flex: 1; height: 2px; background: #888; }

.mapview { flex: 1; min-width: 0; margin: 0 4px 1px 5px; border: solid #8c8c8c; border-width: 1px 0 0 1px; display: grid; grid-template: minmax(0, 1fr) 14px / minmax(0, 1fr) 14px; background: #f0f0f0; }
.map { width: 100%; height: 100%; background: #fff; display: block; }
.vscroll { display: flex; justify-content: center; padding: 49px 0 17px; }
.vscroll i { width: 2px; background: #8c8c8c; }
.mapfoot { grid-column: 1 / -1; display: flex; align-items: center; border-bottom: 1px solid #aaa; }
.mapfoot button { width: 14px; height: 13px; display: grid; place-items: center; }
.mapfoot svg { width: 9px; height: 9px; }
.lit { background: #cfe6f7; }
.bar { width: 1px; height: 11px; background: #aaa; margin: 0 5px 0 2px; }
.track { flex: 1; height: 2px; background: #888; margin: 0 29px 0 14px; }

.search { flex: 0 0 250px; display: flex; flex-direction: column; }
.search .paneltools { height: 23px; }
.search .paneltools .blue { color: #3468b8; }
.search .paneltools .sep { width: 7px; }
.combo.local { flex: 1; margin-left: 4px; height: 18px; border-color: #ccc; }
.local select { font-size: 11px; }
.sbody { flex: 1; min-height: 0; display: flex; border-top: 1px solid #999; font: 9px/12px "DejaVu Sans", sans-serif; color: #2e4960; }
.smain { flex: 1; min-width: 0; background: #fff; border-bottom: 1px solid #aaa; }
.sbar { flex: 0 0 13px; display: flex; flex-direction: column; justify-content: space-between; align-items: center; padding: 12px 0 0; background: #f7f7f7; }
.sbar svg { width: 10px; height: 10px; }
.sbody a { color: #2b70b8; }
.tabs { display: flex; gap: 15px; padding: 5px 0 0 9px; }
.tabs b { color: #111; }
.query { display: flex; align-items: center; gap: 8px; padding: 3px 0 0 7px; }
.query input { width: 184px; height: 19px; border: 1px solid #888; border-width: 2px 1px 1px 2px; background: #fff; padding: 0 1px; font: 11px/14px "Liberation Sans", sans-serif; color: #3a3566; }
.query button { width: 18px; height: 18px; }
.query svg { width: 18px; height: 18px; display: block; }
.extent { padding: 4px 0 0 7px; height: 25px; display: flex; gap: 2px; }
.extent svg, .found svg { width: 8px; height: 8px; margin: 2px 0 0 2px; }
.found { height: 18px; display: flex; justify-content: space-between; align-items: center; background: #f1f1f1; border-top: 1px solid #bbb; padding: 0 10px 0 7px; }
article { height: 47px; display: flex; gap: 4px; padding: 3px 0 0 4px; }
article:nth-of-type(even) { background: #ededed; }
article svg { width: 14px; height: 14px; flex: none; }
article div { min-width: 0; white-space: nowrap; overflow: hidden; }
article h3 { font-size: 10px; line-height: 14px; color: #2b74c4; }
article h3 em { font-style: normal; color: #2f8a35; }
article p { line-height: 12px; }
article cite { display: block; font-style: normal; line-height: 13px; color: #258a29; }
.pager { flex: 0 0 16px; padding-right: 14px; text-align: center; color: #e2474a; font: 9px/16px "DejaVu Sans", sans-serif; }

.status { flex: 0 0 17px; display: flex; justify-content: flex-end; gap: 7px; padding: 2px 75px 0 0; background: #f0f0f0; }

.taskbar { flex: 0 0 40px; display: flex; align-items: center; border-top: 1px solid #c9bfbb; padding: 0 14px 0 421px; background: linear-gradient(90deg, #f3ded4, #f8e7d8 36%, #f7e4d6 55%, #f1dfd7 75%, #e9dad5); color: #2d2a2a; }
.tsearch { display: flex; align-items: center; width: 182px; height: 26px; padding: 0 7px 0 9px; border-radius: 13px; background: #fffaf5; border: 1px solid #eadbd0; }
.tsearch svg { width: 14px; height: 14px; flex: none; }
.tsearch input { flex: 1; min-width: 0; border: 0; background: none; font-size: 12px; padding: 0 0 0 7px; }
.tsearch input::placeholder { color: #555; opacity: 1; }
.tsearch .bird { width: 34px; height: 22px; }
.apps { display: flex; gap: 5px; margin-left: 4px; }
.apps button { width: 32px; height: 34px; position: relative; display: grid; place-items: center; border-radius: 3px; }
.apps svg { width: 21px; height: 21px; }
.apps .run::after { content: ""; position: absolute; bottom: 1px; width: 5px; height: 2px; background: #8c7e78; border-radius: 1px; }
.apps .active { background: #f6efeb; }
.apps .active::after { width: 13px; background: #1976b9; }
.tray { margin-left: auto; display: flex; align-items: center; gap: 12px; }
.ico { width: 15px; height: 15px; display: block; }
.lang { font-size: 10px; }
.net { display: flex; gap: 5px; margin-left: 1px; }
.tray time { font-size: 10px; line-height: 13px; text-align: right; margin-left: 2px; }
.tray time + .ico { margin-left: -6px; }
.pre { width: 22px; height: 22px; }
.pretext { font: bold 6px "Liberation Sans", sans-serif; fill: #4c3900; }

.tablewin { position: absolute; left: 90px; top: 168px; width: 356px; height: 328px; display: flex; flex-direction: column; background: #f0f0f0; border: solid #222; border-width: 0 2px 2px 0; padding: 2px 2px 0 1px; }
.tablewin h2, .tablewin h3 { flex: none; display: flex; align-items: center; justify-content: space-between; padding: 0 16px 0 4px; height: 17px; background: linear-gradient(90deg, #9ab5d7, #b4cde9); }
.tablewin h2 svg, .tablewin h3 svg { width: 9px; height: 9px; display: block; }
.tablewin h3 { height: 20px; padding-right: 1px; border-bottom: 2px solid #70747b; }
.ttools { height: 24px; padding-left: 3px; }
.ttools .dd { width: 9px; }
.gridbox { flex: 1; min-height: 0; overflow: hidden; display: flex; justify-content: space-between; padding-top: 1px; border-left: 3px solid #8a8a8a; background: #efefef; }
.gridbox table { border-spacing: 0; table-layout: fixed; width: 119px; height: 216px; font: 9px/11px "Liberation Sans", sans-serif; }
.gridbox th, .gridbox td { padding: 0 3px 0 2px; border: solid #666; border-width: 0 1px 1px 0; background: #fff; text-align: right; }
.gridbox th { height: 14px; background: #f0efec; text-align: center; padding: 0; color: #222; }
.gridbox td:first-child { background: #f0f0f0; border: solid #333; border-width: 0 2px 1px 1px; padding: 0 0 0 2px; }
.gridbox td:nth-child(3) { text-align: left; }
.gridbox .cur td:nth-child(2) { box-shadow: inset 0 0 0 2px #111; }
.gridbox td svg { width: 6px; height: 8px; display: block; }
.c0 { width: 13px; } .c1 { width: 29px; } .c2 { width: 53px; } .c3 { width: 24px; }
.gscroll { width: 18px; border-left: 1px solid #f8f8f8; display: flex; padding: 15px 0 0 7px; }
.gscroll i { width: 2px; height: 34px; background: #8a8a8a; }
.recnav { flex: 0 0 25px; display: flex; align-items: center; padding-left: 5px; background: linear-gradient(#fafafa, #f3f3f3); }
.recnav svg { width: 9px; height: 9px; }
.recnav .on { width: 19px; height: 19px; }
.recnav .on svg, .recnav .on + button svg { width: 14px; height: 14px; }
.recnav input { width: 51px; height: 16px; border: 0; background: #fff; text-align: right; padding: 0 4px; font-size: 10px; }
.recnav span { margin-left: 2px; }
.tabstrip { flex: 0 0 19px; padding: 1px 0 0 3px; }
.tabstrip button { height: 16px; padding: 0 3px; background: #fff; outline: 1px dotted #333; outline-offset: -2px; border: 1px solid #bbb; line-height: 14px; }
.cursor { position: absolute; right: -4px; top: 0; width: 20px; height: 22px; }

.recorder { position: absolute; left: 0; bottom: 0; width: 410px; height: 44px; display: flex; align-items: center; background: #fff; border-radius: 0 4px 0 0; border-top: 1px solid #999; box-shadow: 1px 0 2px #999; }
.dark { width: 102px; height: 43px; flex: none; display: flex; align-items: center; gap: 10px; padding: 4px 0 0 13px; background: #2d2d2d; border-radius: 0 16px 16px 0 / 0 22px 22px 0; }
.dark button { width: 33px; height: 33px; }
.dark svg { width: 33px; height: 33px; display: block; }
.clock { width: 99px; height: 36px; margin-left: 25px; padding: 0 6px; background: #f2f2f2; border-radius: 3px; display: flex; flex-direction: column; color: #222; }
.clock strong { font: bold 15px/19px "Liberation Sans", sans-serif; color: #000; }
.dots { width: 13px; margin: 18px 0 0 12px; border-top: 1px dotted #4aa3d0; }
.vol { width: 56px; height: 18px; margin: 3px 0 0 17px; }
.cam { width: 22px; height: 24px; margin: 3px 0 0 11px; }
.pen { width: 21px; height: 21px; margin-left: 11px; }

.mark { position: absolute; right: 11px; top: 14px; display: flex; gap: 5px; color: #fff; }
.mark svg { width: 30px; height: 26px; fill: #fff; filter: drop-shadow(0 0 1px #ddd); }
.mark div { display: flex; flex-direction: column; text-shadow: 0 0 2px #ccc; }
.mark span { font: 11px/11px "DejaVu Sans", sans-serif; }
.mark strong { font: bold 13px/13px "DejaVu Sans", sans-serif; }
```
